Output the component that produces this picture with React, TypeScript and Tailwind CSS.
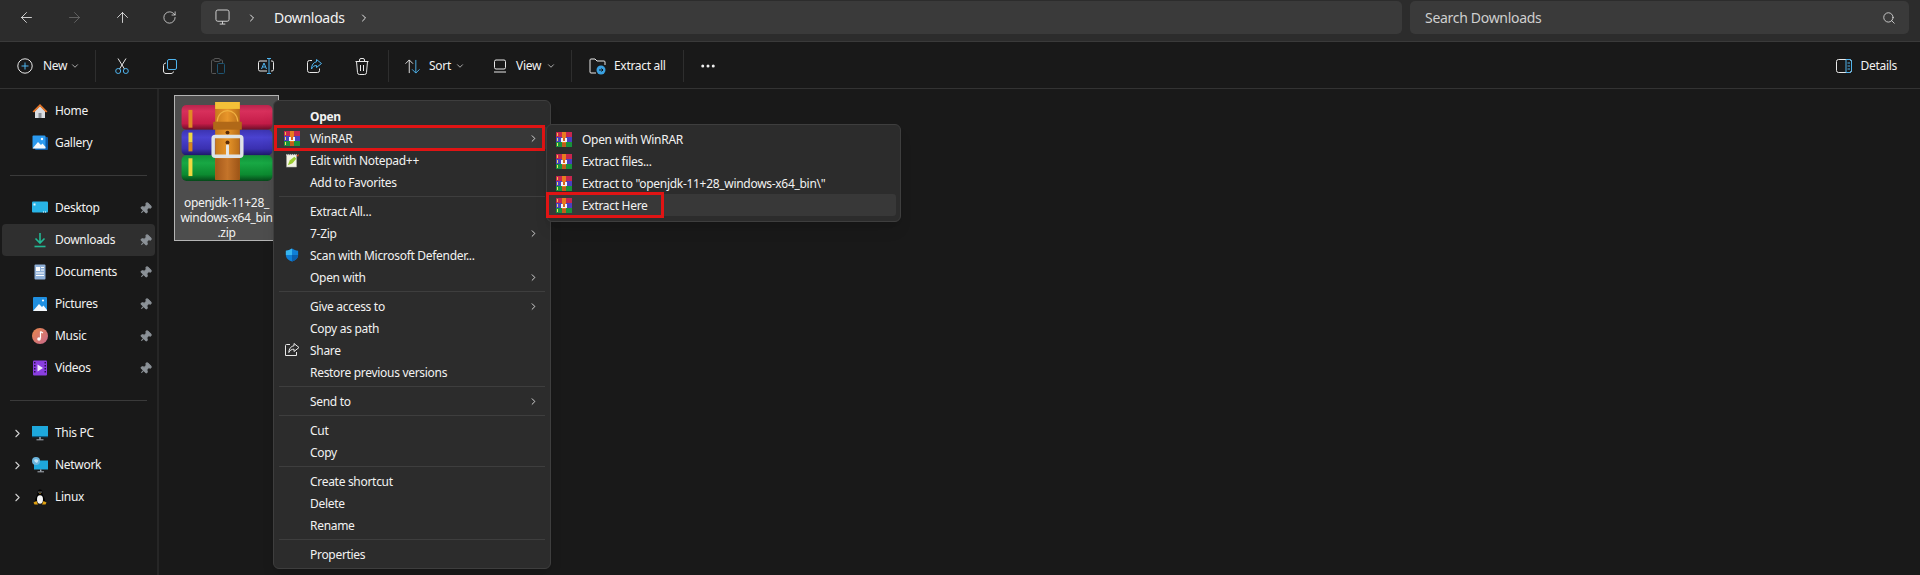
import React from 'react';
import { ArrowLeft, ArrowRight, ArrowUp, RotateCw, ChevronRight, ChevronDown, Search, MoreHorizontal, Pin } from 'lucide-react';

const font = "font-['Noto_Sans','Liberation_Sans',sans-serif] tracking-[-0.3px]";

// WinRAR archive icon on the file tile
const WinRarIcon: React.FC<{ className?: string }> = ({ className }) => (
  <svg viewBox="0 0 92 80" className={className}>
    <defs>
      <linearGradient id="rarRed" x1="0" y1="0" x2="0" y2="1">
        <stop offset="0" stopColor="#b8244c" />
        <stop offset="0.25" stopColor="#d8305c" />
        <stop offset="0.75" stopColor="#c41c48" />
        <stop offset="1" stopColor="#6c0e28" />
      </linearGradient>
      <linearGradient id="rarBlue" x1="0" y1="0" x2="0" y2="1">
        <stop offset="0" stopColor="#3c34b0" />
        <stop offset="0.3" stopColor="#4a42d0" />
        <stop offset="0.75" stopColor="#3a30b0" />
        <stop offset="1" stopColor="#1c1866" />
      </linearGradient>
      <linearGradient id="rarGreen" x1="0" y1="0" x2="0" y2="1">
        <stop offset="0" stopColor="#109038" />
        <stop offset="0.3" stopColor="#18a844" />
        <stop offset="0.75" stopColor="#0c8a30" />
        <stop offset="1" stopColor="#06481a" />
      </linearGradient>
      <linearGradient id="rarBelt" x1="0" y1="0" x2="1" y2="0">
        <stop offset="0" stopColor="#c87a1c" />
        <stop offset="0.5" stopColor="#e8962a" />
        <stop offset="1" stopColor="#b86c18" />
      </linearGradient>
      <linearGradient id="rarBeltLow" x1="0" y1="0" x2="1" y2="0">
        <stop offset="0" stopColor="#a4581a" />
        <stop offset="0.5" stopColor="#c4742a" />
        <stop offset="1" stopColor="#9c5416" />
      </linearGradient>
    </defs>
    <rect x="0" y="3" width="92" height="25" rx="5" fill="url(#rarRed)" />
    <rect x="0" y="28" width="92" height="26" rx="5" fill="url(#rarBlue)" />
    <rect x="0" y="54" width="92" height="26" rx="5" fill="url(#rarGreen)" />
    <rect x="7" y="8" width="4" height="18" fill="#e08a24" />
    <rect x="7" y="31" width="4" height="10" fill="#f0d840" />
    <rect x="7" y="41" width="4" height="9" fill="#d8861c" />
    <rect x="7" y="57" width="4" height="18" fill="#f0d840" />
    <rect x="34" y="0" width="25" height="78" fill="url(#rarBelt)" />
    <rect x="34" y="0" width="25" height="7" fill="#f4c038" />
    <path d="M36 20 C37 5 56 5 57 20" fill="none" stroke="#f0b040" strokeWidth="1.2" />
    <rect x="32" y="20" width="29" height="8" fill="#b06818" />
    <circle cx="46.5" cy="31" r="2" fill="#5a2c08" />
    <circle cx="46.5" cy="41" r="2" fill="#5a2c08" />
    <rect x="32" y="35" width="29" height="20" rx="2" fill="none" stroke="#dfe3e6" strokeWidth="3.5" />
    <rect x="34" y="57" width="25" height="22" fill="url(#rarBeltLow)" />
    <rect x="45" y="43" width="3" height="12" rx="1" fill="#e4e8ea" />
  </svg>
);

// Same archive at menu size, squared off as in the shell menu
const SmallRar = () => (
  <svg viewBox="0 0 16 15" className="w-[16px] h-[15px]" shapeRendering="crispEdges">
    <rect x="0" y="0" width="16" height="5" fill="#c8264e" />
    <rect x="0" y="5" width="16" height="5" fill="#4a40c0" />
    <rect x="0" y="10" width="16" height="5" fill="#18923c" />
    <rect x="1" y="1" width="1" height="3" fill="#f0c040" />
    <rect x="1" y="6" width="1" height="3" fill="#f0e060" />
    <rect x="1" y="11" width="1" height="3" fill="#f0e060" />
    <rect x="6" y="0" width="4" height="15" fill="#e87c20" />
    <rect x="5" y="6" width="6" height="4" fill="#f2f2f2" />
    <rect x="7" y="6" width="2" height="3" fill="#d8641c" />
    <rect x="6" y="11" width="4" height="4" fill="#c05c1c" />
  </svg>
);

const Shield = () => (
  <svg viewBox="0 0 16 16" className="w-[14px] h-[16px]">
    <path d="M8 0.5 C10 2 12.5 2.8 15 3 V8 C15 11.5 12 14.3 8 15.5 C4 14.3 1 11.5 1 8 V3 C3.5 2.8 6 2 8 0.5Z" fill="#0f7fd6" />
    <path d="M8 0.5 V8 H1 V3 C3.5 2.8 6 2 8 0.5Z" fill="#38b6f0" />
    <path d="M8 8 H15 C15 11.5 12 14.3 8 15.5Z" fill="#0a5fae" />
  </svg>
);

const Notepad = () => (
  <svg viewBox="0 0 16 16" className="w-[15px] h-[15px]">
    <rect x="1.5" y="2" width="11" height="13" fill="#f4f4e4" stroke="#888" strokeWidth="0.5" />
    <path d="M2 1v2M4 1v2M6 1v2M8 1v2M10 1v2M12 1v2" stroke="#eee" strokeWidth="0.8" />
    <path d="M3 13 L5 8 L10 4 L12 6 L8 11Z" fill="#9ccc30" />
    <path d="M12 3 L15 1 L14 4Z" fill="#d04020" />
  </svg>
);

const ShareOutline = () => (
  <svg viewBox="0 0 16 16" className="w-[16px] h-[16px]" fill="none" stroke="#e8e8e8" strokeWidth="1">
    <path d="M6 2.5H2.5a1 1 0 0 0-1 1V13.5h11V10" />
    <path d="M10 1.5 L15 5.5 L10 9.5 V7.2 C7.5 7.2 6 8.2 4.8 10.5 C5 7 7 4 10 3.8Z" />
  </svg>
);

// Sidebar icons
const HomeIcon = () => (
  <svg viewBox="0 0 16 16" className="w-4 h-4">
    <path d="M3 8 V15 H13 V8 L8 3Z" fill="#d9dde2" />
    <rect x="6.5" y="10" width="3" height="5" fill="#8a8f96" />
    <path d="M0.5 8.5 L8 1 L15.5 8.5 L14 9.5 L8 3.5 L2 9.5Z" fill="#e8782a" />
  </svg>
);
const GalleryIcon = () => (
  <svg viewBox="0 0 16 16" className="w-4 h-4">
    <rect x="3" y="2" width="13" height="13" rx="1" fill="#0d5aa8" />
    <rect x="0.5" y="0.5" width="13" height="13" rx="1" fill="#2b9af0" />
    <path d="M0.5 13.5 L6 7 L9 10 L10.5 8.5 L13.5 12 V13.5Z" fill="#f4f8fc" />
    <circle cx="10" cy="4" r="1.2" fill="#f4f8fc" />
  </svg>
);
const DesktopIcon = () => (
  <svg viewBox="0 0 16 16" className="w-4 h-4">
    <rect x="0" y="1.5" width="16" height="11" rx="1" fill="#28b4e6" />
    <rect x="1.5" y="3.5" width="2" height="2" fill="#e4f6fc" />
    <rect x="11" y="11.5" width="1" height="1" fill="#ffffff" />
    <rect x="13" y="11.5" width="1" height="1" fill="#ffffff" />
  </svg>
);
const DownloadIcon = () => (
  <svg viewBox="0 0 16 16" className="w-4 h-4" fill="none" stroke="#22b894" strokeWidth="1.6">
    <path d="M8 1 V10.5 M3.5 6.5 L8 11 L12.5 6.5" />
    <path d="M2.5 14.5 H13.5" />
  </svg>
);
const DocumentsIcon = () => (
  <svg viewBox="0 0 16 16" className="w-4 h-4">
    <rect x="2.5" y="0.5" width="11" height="15" rx="1" fill="#8fb0d8" />
    <rect x="4" y="3" width="4" height="4" fill="#ffffff" />
    <path d="M9 3.5h3M9 6h3M4 9h8M4 11.5h8" stroke="#ffffff" strokeWidth="1" />
  </svg>
);
const PicturesIcon = () => (
  <svg viewBox="0 0 16 16" className="w-4 h-4">
    <rect x="1" y="1" width="14" height="14" rx="1" fill="#1f8fe0" />
    <path d="M1 15 L7 8 L10 11 L11.5 9.5 L15 14 V15Z" fill="#f4f8fc" />
    <circle cx="11" cy="4.5" r="1.1" fill="#f4f8fc" />
  </svg>
);
const MusicIcon = () => (
  <svg viewBox="0 0 16 16" className="w-4 h-4">
    <defs>
      <linearGradient id="musicBg" x1="0" y1="0" x2="1" y2="1">
        <stop offset="0" stopColor="#e8884c" />
        <stop offset="1" stopColor="#c8688c" />
      </linearGradient>
    </defs>
    <circle cx="8" cy="8" r="8" fill="url(#musicBg)" />
    <path d="M8.5 3.5 V10.5 M8.5 3.5 L11 5" stroke="#ffffff" strokeWidth="1.2" fill="none" />
    <circle cx="7" cy="11" r="1.8" fill="#ffffff" />
  </svg>
);
const VideosIcon = () => (
  <svg viewBox="0 0 16 16" className="w-4 h-4">
    <rect x="1" y="0.5" width="14" height="15" rx="1" fill="#8a3ee0" />
    <path d="M2 2h1.5v1.5H2zM2 5h1.5v1.5H2zM2 8h1.5v1.5H2zM2 11h1.5v1.5H2zM12.5 2H14v1.5h-1.5zM12.5 5H14v1.5h-1.5zM12.5 8H14v1.5h-1.5zM12.5 11H14v1.5h-1.5z" fill="#2a1050" />
    <path d="M5.5 4.5 L11 8 L5.5 11.5Z" fill="#f0e8fc" />
  </svg>
);
const PcIcon = () => (
  <svg viewBox="0 0 16 16" className="w-4 h-4">
    <rect x="0" y="1" width="16" height="11" fill="#1ea8dc" />
    <rect x="0" y="11" width="16" height="1.2" fill="#0f5f88" />
    <rect x="7.3" y="12" width="1.4" height="2.5" fill="#a8b0b8" />
    <rect x="4.5" y="14.3" width="7" height="1" fill="#a8b0b8" />
  </svg>
);
const NetworkIcon = () => (
  <svg viewBox="0 0 16 16" className="w-4 h-4">
    <rect x="2" y="3.5" width="14" height="9" fill="#1ea8dc" />
    <rect x="8" y="12.5" width="1.4" height="2" fill="#a8b0b8" />
    <rect x="5.5" y="14.3" width="6.5" height="1" fill="#a8b0b8" />
    <circle cx="4" cy="4" r="4" fill="#6ab4dc" />
    <path d="M2 3 C3.5 2 5 2 6.5 3.5 L5 6 L3 5Z" fill="#c4e4f4" />
  </svg>
);
const LinuxIcon = () => (
  <svg viewBox="0 0 16 16" className="w-4 h-4">
    <path d="M8 0.5 C6 0.5 5.5 2.5 5.5 4.5 C5.5 6.5 3 8.5 3 11.5 C3 13.5 5 15 8 15 C11 15 13 13.5 13 11.5 C13 8.5 10.5 6.5 10.5 4.5 C10.5 2.5 10 0.5 8 0.5Z" fill="#000000" />
    <ellipse cx="8" cy="10.5" rx="3" ry="4.2" fill="#f4f4f4" />
    <path d="M1.5 13.5 L4.5 12 L6 15.5 H2.5Z M14.5 13.5 L11.5 12 L10 15.5 H13.5Z" fill="#e0a010" />
    <path d="M7 4.2 H9 L8 5.2Z" fill="#e0a010" />
    <circle cx="7" cy="3" r="0.6" fill="#ffffff" />
    <circle cx="9" cy="3" r="0.6" fill="#ffffff" />
  </svg>
);

type SideItem = { label: string; icon: React.ReactNode; pinned?: boolean; active?: boolean; expand?: boolean };

const quickAccess: SideItem[] = [
  { label: 'Desktop', icon: <DesktopIcon />, pinned: true },
  { label: 'Downloads', icon: <DownloadIcon />, pinned: true, active: true },
  { label: 'Documents', icon: <DocumentsIcon />, pinned: true },
  { label: 'Pictures', icon: <PicturesIcon />, pinned: true },
  { label: 'Music', icon: <MusicIcon />, pinned: true },
  { label: 'Videos', icon: <VideosIcon />, pinned: true },
];

const SideRow: React.FC<SideItem> = ({ label, icon, pinned, active, expand }) => (
  <div className={`relative h-8 flex items-center mx-[2px] rounded-[4px] ${active ? 'bg-[#2f2f2f]' : ''}`}>
    <div className="w-[30px] flex justify-center pl-[1px]">
      {expand && <ChevronRight className="w-[13px] h-[13px] text-[#d0d0d0]" />}
    </div>
    <div className="w-[16px] flex justify-center mr-[7px]">{icon}</div>
    <span className="text-[12px] text-[#f2f2f2] flex-1">{label}</span>
    {pinned && <Pin className="w-[13px] h-[13px] mr-[3px] text-[#8c9298] fill-[#8c9298] rotate-45" />}
  </div>
);

// Two tone toolbar icons, white outline with a blue accent
const stroke = { fill: 'none', strokeWidth: 1 };
const ToolIcons = {
  cut: (
    <svg viewBox="0 0 14 16" className="w-[14px] h-[16px]" {...stroke}>
      <path d="M3 0.5 L9.5 11 M11 0.5 L4.5 11" stroke="#e8e8e8" />
      <circle cx="3.2" cy="13" r="2.5" stroke="#4fb4ee" />
      <circle cx="10.8" cy="13" r="2.5" stroke="#4fb4ee" />
    </svg>
  ),
  copy: (
    <svg viewBox="0 0 14 15" className="w-[14px] h-[15px]" {...stroke}>
      <rect x="4.5" y="0.5" width="9" height="10" rx="1.5" stroke="#4fb4ee" />
      <path d="M3 4 C1.5 4.2 0.5 5 0.5 6.5 V12 C0.5 13.5 1.5 14.5 3 14.5 H8 C9.5 14.5 10.3 13.7 10.5 12.5" stroke="#e8e8e8" />
    </svg>
  ),
  paste: (
    <svg viewBox="0 0 14 16" className="w-[14px] h-[16px]" {...stroke}>
      <path d="M3 2 H1.5 A1 1 0 0 0 0.5 3 V14.5 A1 1 0 0 0 1.5 15.5 H5 M9 2 H10.5 A1 1 0 0 1 11.5 3 V5" stroke="#565656" />
      <rect x="3" y="0.5" width="6" height="3" rx="1" stroke="#565656" />
      <rect x="6.5" y="5.5" width="7" height="10" rx="1" stroke="#1f5572" />
    </svg>
  ),
  rename: (
    <svg viewBox="0 0 16 16" className="w-[16px] h-[16px]" {...stroke}>
      <path d="M9 3 H2 A1.5 1.5 0 0 0 0.5 4.5 V11.5 A1.5 1.5 0 0 0 2 13 H9 M13 3 H14 A1.5 1.5 0 0 1 15.5 4.5 V11.5 A1.5 1.5 0 0 1 14 13 H13" stroke="#e8e8e8" />
      <path d="M9 0.5 H13 M11 0.5 V15.5 M9 15.5 H13" stroke="#4fb4ee" />
      <path d="M3.5 11 L6 5 L8.5 11 M4.5 9 H7.5" stroke="#4fb4ee" />
    </svg>
  ),
  share: (
    <svg viewBox="0 0 15 14" className="w-[15px] h-[14px]" {...stroke}>
      <path d="M5 1.5 H2.5 A2 2 0 0 0 0.5 3.5 V11.5 A2 2 0 0 0 2.5 13.5 H10.5 A2 2 0 0 0 12.5 11.5 V9.5" stroke="#e8e8e8" />
      <path d="M9.5 0.5 L14.5 4.5 L9.5 8.5 V6.5 C7.5 6.5 5.5 7.5 4.5 10 C4.5 6 6.5 3.2 9.5 2.8Z" stroke="#4fb4ee" />
    </svg>
  ),
  trash: (
    <svg viewBox="0 0 14 17" className="w-[14px] h-[17px]" {...stroke} stroke="#e8e8e8">
      <path d="M0.5 3.5 H13.5 M4.5 3.5 V2 A1.5 1.5 0 0 1 6 0.5 H8 A1.5 1.5 0 0 1 9.5 2 V3.5" />
      <path d="M1.5 3.5 L2.5 14.5 A2 2 0 0 0 4.5 16.5 H9.5 A2 2 0 0 0 11.5 14.5 L12.5 3.5" />
      <path d="M5.5 7 V13 M8.5 7 V13" />
    </svg>
  ),
};

const ToolSep = () => <div className="w-px h-[32px] bg-[#2e2e2e]" />;

const menuRows: (string | { label: string; bold?: boolean; icon?: React.ReactNode; more?: boolean; boxed?: boolean })[] = [
  { label: 'Open', bold: true },
  { label: 'WinRAR', icon: <SmallRar />, more: true, boxed: true },
  { label: 'Edit with Notepad++', icon: <Notepad /> },
  { label: 'Add to Favorites' },
  'sep',
  { label: 'Extract All...' },
  { label: '7-Zip', more: true },
  { label: 'Scan with Microsoft Defender...', icon: <Shield /> },
  { label: 'Open with', more: true },
  'sep',
  { label: 'Give access to', more: true },
  { label: 'Copy as path' },
  { label: 'Share', icon: <ShareOutline /> },
  { label: 'Restore previous versions' },
  'sep',
  { label: 'Send to', more: true },
  'sep',
  { label: 'Cut' },
  { label: 'Copy' },
  'sep',
  { label: 'Create shortcut' },
  { label: 'Delete' },
  { label: 'Rename' },
  'sep',
  { label: 'Properties' },
];

const subRows = ['Open with WinRAR', 'Extract files...', 'Extract to "openjdk-11+28_windows-x64_bin\\"', 'Extract Here'];

const App: React.FC = () => {
  return (
    <div className={`${font} relative w-[1920px] h-[575px] overflow-hidden bg-[#191919] text-[#f2f2f2]`}>
      {/* Address bar */}
      <div className="h-[42px] bg-[#2c2c2c] border-b border-[#3a3a3a] flex items-start pt-[1px] pr-[11px]">
        <div className="w-[201px] h-[33px] flex items-center pl-[18px] gap-[31px] text-[#e8e8e8]">
          <ArrowLeft className="w-[17px] h-[17px]" strokeWidth={1.2} />
          <ArrowRight className="w-[17px] h-[17px] text-[#6a6a6a]" strokeWidth={1.2} />
          <ArrowUp className="w-[17px] h-[17px]" strokeWidth={1.2} />
          <RotateCw className="w-[15px] h-[15px]" strokeWidth={1.2} />
        </div>
        <div className="flex-1 h-[33px] bg-[#3a3a3a] rounded-[5px] flex items-center pl-[14px]">
          <svg viewBox="0 0 16 18" className="w-[15px] h-[17px]" fill="none" stroke="#d8d8d8" strokeWidth="1">
            <rect x="1" y="1" width="14" height="12" rx="2" />
            <path d="M5 16 H11 M8 13 V16" />
          </svg>
          <ChevronRight className="w-[12px] h-[12px] ml-[16px] text-[#e8e8e8]" />
          <span className="text-[14px] ml-[16px] w-[69px]">Downloads</span>
          <ChevronRight className="w-[12px] h-[12px] ml-[15px] text-[#e8e8e8]" />
        </div>
        <div className="w-[499px] ml-[8px] h-[33px] bg-[#3a3a3a] rounded-[5px] flex items-center pl-[15px] pr-[13px] justify-between">
          <span className="text-[14px] text-[#cfcfcf]">Search Downloads</span>
          <Search className="w-[14px] h-[14px] text-[#e0e0e0]" strokeWidth={1.4} />
        </div>
      </div>

      {/* Command bar */}
      <div className="h-[47px] bg-[#191919] border-b border-[#333333] flex items-center text-[12px] pt-[2px] pl-[17px] pr-[23px]">
        <svg viewBox="0 0 16 16" className="w-[16px] h-[16px]" fill="none" strokeWidth="1">
          <circle cx="8" cy="8" r="7.2" stroke="#e8e8e8" />
          <path d="M8 4.5 V11.5 M4.5 8 H11.5" stroke="#4fb4ee" />
        </svg>
        <span className="ml-[10px] w-[23px]">New</span>
        <ChevronDown className="w-[10px] h-[10px] ml-[4px] text-[#c8c8c8]" />
        <div className="ml-[15px]"><ToolSep /></div>
        <div className="w-[48px] ml-[2px] flex justify-center">{ToolIcons.cut}</div>
        <div className="w-[48px] flex justify-center">{ToolIcons.copy}</div>
        <div className="w-[48px] flex justify-center">{ToolIcons.paste}</div>
        <div className="w-[48px] flex justify-center">{ToolIcons.rename}</div>
        <div className="w-[48px] flex justify-center">{ToolIcons.share}</div>
        <div className="w-[48px] flex justify-center">{ToolIcons.trash}</div>
        <div className="ml-[2px]"><ToolSep /></div>
        <svg viewBox="0 0 18 16" className="w-[18px] h-[15px] ml-[15px]" fill="none" strokeWidth="1">
          <path d="M5 15 V1 M1 5 L5 1 L9 5" stroke="#e8e8e8" />
          <path d="M12 1 V15 M8 11 L12 15 L16 11" stroke="#4fb4ee" />
        </svg>
        <span className="ml-[7px] w-[23px]">Sort</span>
        <ChevronDown className="w-[10px] h-[10px] ml-[3px] text-[#c8c8c8]" />
        <svg viewBox="0 0 14 14" className="w-[14px] h-[14px] ml-[28px]" fill="none" stroke="#e8e8e8" strokeWidth="1">
          <rect x="1.5" y="1" width="11" height="9" rx="1.5" />
          <path d="M1 13 H13" />
        </svg>
        <span className="ml-[9px] w-[26px]">View</span>
        <ChevronDown className="w-[10px] h-[10px] ml-[4px] text-[#c8c8c8]" />
        <div className="ml-[15px]"><ToolSep /></div>
        <svg viewBox="0 0 18 18" className="w-[18px] h-[18px] ml-[17px]" fill="none" strokeWidth="1">
          <path d="M7 16 H2 A1 1 0 0 1 1 15 V3 A1 1 0 0 1 2 2 H6 L8 4 H15 A1 1 0 0 1 16 5 V8" stroke="#e8e8e8" />
          <circle cx="12" cy="13" r="4.5" fill="#3aa0e0" stroke="none" />
          <path d="M10 13 H14 M12.5 11.5 L14 13 L12.5 14.5" stroke="#101010" />
        </svg>
        <span className="ml-[7px] w-[52px]">Extract all</span>
        <div className="ml-[17px]"><ToolSep /></div>
        <MoreHorizontal className="w-[18px] h-[18px] ml-[15px] text-[#f0f0f0]" />
        <div className="flex-1" />
        <svg viewBox="0 0 16 14" className="w-[16px] h-[14px]" fill="none" strokeWidth="1">
          <rect x="0.5" y="0.5" width="15" height="13" rx="2" stroke="#e8e8e8" />
          <path d="M10 0.5 H13.5 A2 2 0 0 1 15.5 2.5 V11.5 A2 2 0 0 1 13.5 13.5 H10 Z" stroke="#4fb4ee" />
          <path d="M11.5 4 H14 M11.5 7 H14 M11.5 10 H14" stroke="#4fb4ee" />
        </svg>
        <span className="ml-[9px]">Details</span>
      </div>

      <div className="flex h-[486px]">
        {/* Navigation pane */}
        <div className="w-[159px] border-r-2 border-[#262626] pt-[6px] text-[12px]">
          <SideRow label="Home" icon={<HomeIcon />} />
          <SideRow label="Gallery" icon={<GalleryIcon />} />
          <div className="h-px bg-[#3a3a3a] ml-[10px] mr-[10px] mt-4 mb-4" />
          {quickAccess.map(item => <SideRow key={item.label} {...item} />)}
          <div className="h-px bg-[#3a3a3a] ml-[10px] mr-[10px] mt-4 mb-4" />
          <SideRow label="This PC" icon={<PcIcon />} expand />
          <SideRow label="Network" icon={<NetworkIcon />} expand />
          <SideRow label="Linux" icon={<LinuxIcon />} expand />
        </div>

        {/* File tile */}
        <div className="pl-[15px] pt-[6px]">
          <div className="w-[105px] h-[146px] bg-[#4d4d4d] border border-[#b4b4b4] flex flex-col items-center pt-[6px]">
            <WinRarIcon className="w-[92px] h-[80px]" />
            <div className="text-[12px] leading-[15px] text-center mt-[14px] whitespace-nowrap">
              openjdk-11+28_<br />windows-x64_bin<br />.zip
            </div>
          </div>
        </div>
      </div>

      {/* Context menu */}
      <div className="absolute left-[273px] top-[100px] w-[278px] h-[469px] bg-[#2c2c2c] border border-[#3e3e3e] rounded-[6px] pt-[4px] px-[1px] text-[12px] shadow-lg">
        {menuRows.map((row, i) =>
          typeof row === 'string' ? (
            <div key={i} className="h-[7px] flex items-center px-[4px]">
              <div className="h-px w-full bg-[#3e3e3e]" />
            </div>
          ) : (
            <div key={row.label} className={`relative h-[22px] flex items-center ${row.boxed ? 'bg-[#383838]' : ''}`}>
              <div className="w-[35px] flex justify-center pr-[1px] shrink-0">{row.icon}</div>
              <span className={`flex-1 pt-[1px] ${row.bold ? 'font-bold' : ''}`}>{row.label}</span>
              {row.more && <ChevronRight className="w-[11px] h-[11px] mr-[10px] text-[#e0e0e0]" />}
              {row.boxed && <div className="absolute left-[-1px] right-[4px] top-[-2px] bottom-[-2px] border-[3px] border-[#e01414]" />}
            </div>
          )
        )}
      </div>

      {/* WinRAR submenu sits on top of the main menu's edge */}
      <div className="absolute left-[546px] top-[124px] w-[355px] h-[98px] bg-[#2c2c2c] border border-[#3e3e3e] rounded-[6px] pt-[3px] pl-[1px] pr-[4px] text-[12px] shadow-lg">
        {subRows.map((label, i) => (
          <div key={label} className={`h-[22px] flex items-center rounded-[3px] pl-[8px] ${i === 3 ? 'bg-[#383838]' : ''}`}>
            <SmallRar />
            <span className="ml-[10px] pt-[1px]">{label}</span>
          </div>
        ))}
        <div className="absolute left-[-1px] top-[67px] w-[118px] h-[26px] border-[3px] border-[#e01414]" />
      </div>
    </div>
  );
};

export default App;
